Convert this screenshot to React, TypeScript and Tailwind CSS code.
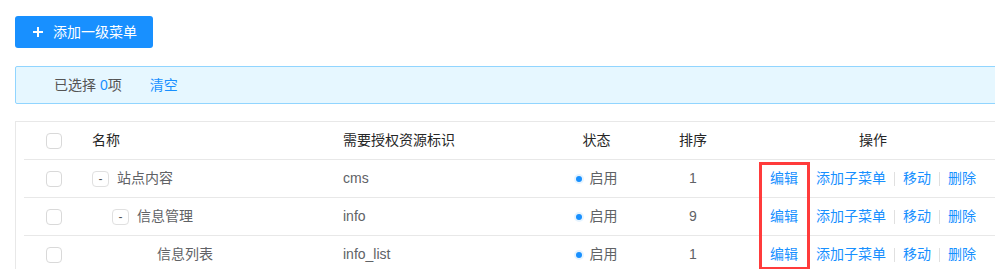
import React from 'react';

type Row = {
  name: string;
  level: number;
  hasChildren: boolean;
  code: string;
  sort: number;
};

const rows: Row[] = [
  { name: '站点内容', level: 0, hasChildren: true, code: 'cms', sort: 1 },
  { name: '信息管理', level: 1, hasChildren: true, code: 'info', sort: 9 },
  { name: '信息列表', level: 2, hasChildren: false, code: 'info_list', sort: 1 },
];

const cols = 'grid grid-cols-[60px_251px_215px_93px_100px_260px]';

const Checkbox = () => (
  <span className="block w-4 h-4 rounded-sm border border-[#d9d9d9] bg-white" />
);

const Sep = () => <span className="inline-block w-px h-[14px] bg-[#e0e0e0] mx-[8px]" />;

export default function App() {
  return (
    <div
      className="w-[995px] h-[269px] overflow-hidden bg-white text-[14px]"
      style={{ fontFamily: '"Liberation Sans", "Noto Sans CJK SC", sans-serif' }}
    >
      <div className="w-[1010px] ml-[15px] pt-[16px]">
        <button className="flex items-center h-8 pl-[18px] pr-[16px] rounded-[3px] bg-[#1890ff] text-white">
          <svg width="10" height="10" viewBox="0 0 10 10" className="mr-[10px]">
            <path d="M5 0v10M0 5h10" stroke="white" strokeWidth="2" />
          </svg>
          <span>添加一级菜单</span>
        </button>

        <div className="mt-[18px] h-[38px] flex items-center pl-[38px] border border-[#91d5ff] bg-[#e6f7ff] rounded-[2px] text-[#555]">
          <span>
            已选择 <span className="text-[#1890ff]">0</span>项
          </span>
          <span className="ml-[28px] text-[#1890ff]">清空</span>
        </div>

        <div className="relative mt-[17px] border-l border-t border-[#e8e8e8] pl-[8px]">
          <div className={`${cols} h-[38px] border-b border-[#e8e8e8] items-center text-[#262626]`}>
            <div className="flex justify-center">
              <Checkbox />
            </div>
            <div className="pl-[8px]">名称</div>
            <div className="pl-[8px]">需要授权资源标识</div>
            <div className="text-center">状态</div>
            <div className="text-center">排序</div>
            <div className="text-center">操作</div>
          </div>

          {rows.map((r) => (
            <div
              key={r.code}
              className={`${cols} h-[38px] border-b border-[#e8e8e8] items-center text-[#606266]`}
            >
              <div className="flex justify-center">
                <Checkbox />
              </div>
              <div className="pl-[8px] flex items-center">
                <span style={{ width: r.level * 20 }} className="shrink-0" />
                {r.hasChildren ? (
                  <span className="w-[17px] h-[16px] mr-[8px] border border-[#e0e0e0] rounded-sm flex items-center justify-center text-[12px] leading-none text-[#555]">
                    -
                  </span>
                ) : (
                  <span className="w-[25px] shrink-0" />
                )}
                <span>{r.name}</span>
              </div>
              <div className="pl-[8px]">{r.code}</div>
              <div className="flex items-center justify-center">
                <span className="w-[6px] h-[6px] rounded-full bg-[#1890ff] shadow-[0_0_0_2px_#e6f4ff] mr-[8px]" />
                <span>启用</span>
              </div>
              <div className="text-center">{r.sort}</div>
              <div className="flex items-center justify-center text-[#1890ff]">
                <span className="mr-[18px]">编辑</span>
                <span>添加子菜单</span>
                <Sep />
                <span>移动</span>
                <Sep />
                <span>删除</span>
              </div>
            </div>
          ))}

          <div className="absolute left-[743px] top-[40px] w-[51px] h-[108px] border-[3px] border-[#ff3b3b]" />
        </div>
      </div>
    </div>
  );
}
